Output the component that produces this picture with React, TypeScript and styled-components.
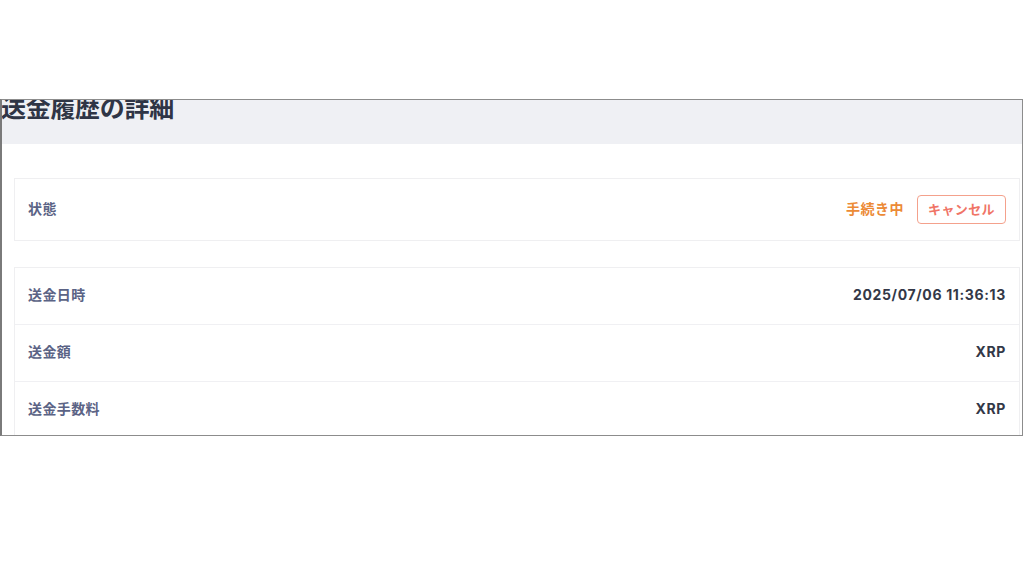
import React from "react";
import styled, { createGlobalStyle } from "styled-components";

const GlobalStyle = createGlobalStyle`
  html, body {
    margin: 0;
    padding: 0;
    background: #ffffff;
  }
  body {
    font-family: Inter, "Noto Sans CJK JP", sans-serif;
  }
`;

const Page = styled.div`
  width: 1024px;
  height: 576px;
  padding-top: 99px;
  box-sizing: border-box;
  background: #ffffff;
`;

const Frame = styled.div`
  width: 1023px;
  height: 337px;
  box-sizing: border-box;
  border: 1px solid #8c8c8c;
  border-left: 2px solid #7a7a7a;
  overflow: hidden;
  background: #ffffff;
`;

const Header = styled.div`
  height: 44px;
  background: #eff0f4;
  display: flex;
  align-items: flex-start;
`;

const Title = styled.h1`
  margin: -11px 0 0 -1px;
  font-family: "Noto Sans CJK JP", sans-serif;
  font-size: 25px;
  line-height: 34px;
  font-weight: 700;
  color: #2f3546;
  letter-spacing: -0.3px;
`;

const Body = styled.div`
  display: flex;
  flex-direction: column;
  gap: 26px;
  padding: 34px 2px 0 12px;
`;

const Card = styled.div`
  border: 1px solid #efeff1;
  background: #ffffff;
  display: flex;
  flex-direction: column;
`;

const Row = styled.div<{ $height: number }>`
  height: ${(p) => p.$height}px;
  padding: 0 13px;
  display: flex;
  align-items: center;
  justify-content: space-between;
  line-height: 18px;
  & + & {
    border-top: 1px solid #f0f0f3;
  }
`;

const Label = styled.span`
  font-size: 14px;
  font-weight: 700;
  letter-spacing: 0.4px;
  color: #5b6385;
  margin-top: -2px;
`;

const Value = styled.span`
  font-size: 14px;
  font-weight: 700;
  letter-spacing: 0.65px;
  color: #333847;
  margin-top: -2px;
`;

const StatusGroup = styled.div`
  display: flex;
  align-items: center;
  gap: 13px;
`;

const Status = styled.span`
  font-size: 14px;
  font-weight: 700;
  letter-spacing: 0.5px;
  color: #ec8a36;
  margin-top: -2px;
`;

const CancelButton = styled.button`
  width: 89px;
  height: 29px;
  border: 1px solid #f4a18c;
  border-radius: 4px;
  background: #ffffff;
  color: #f07466;
  font-family: Inter, "Noto Sans CJK JP", sans-serif;
  font-size: 13px;
  font-weight: 700;
  letter-spacing: 0.4px;
  padding: 0 0 2px;
  cursor: pointer;
`;

const details = [
  { label: "送金日時", value: "2025/07/06 11:36:13" },
  { label: "送金額", value: "XRP" },
  { label: "送金手数料", value: "XRP" },
];

export default function App() {
  return (
    <>
      <GlobalStyle />
      <Page>
        <Frame>
          <Header>
            <Title>送金履歴の詳細</Title>
          </Header>
          <Body>
            <Card>
              <Row $height={61}>
                <Label>状態</Label>
                <StatusGroup>
                  <Status>手続き中</Status>
                  <CancelButton>キャンセル</CancelButton>
                </StatusGroup>
              </Row>
            </Card>
            <Card>
              {details.map((d) => (
                <Row key={d.label} $height={56}>
                  <Label>{d.label}</Label>
                  <Value>{d.value}</Value>
                </Row>
              ))}
            </Card>
          </Body>
        </Frame>
      </Page>
    </>
  );
}
